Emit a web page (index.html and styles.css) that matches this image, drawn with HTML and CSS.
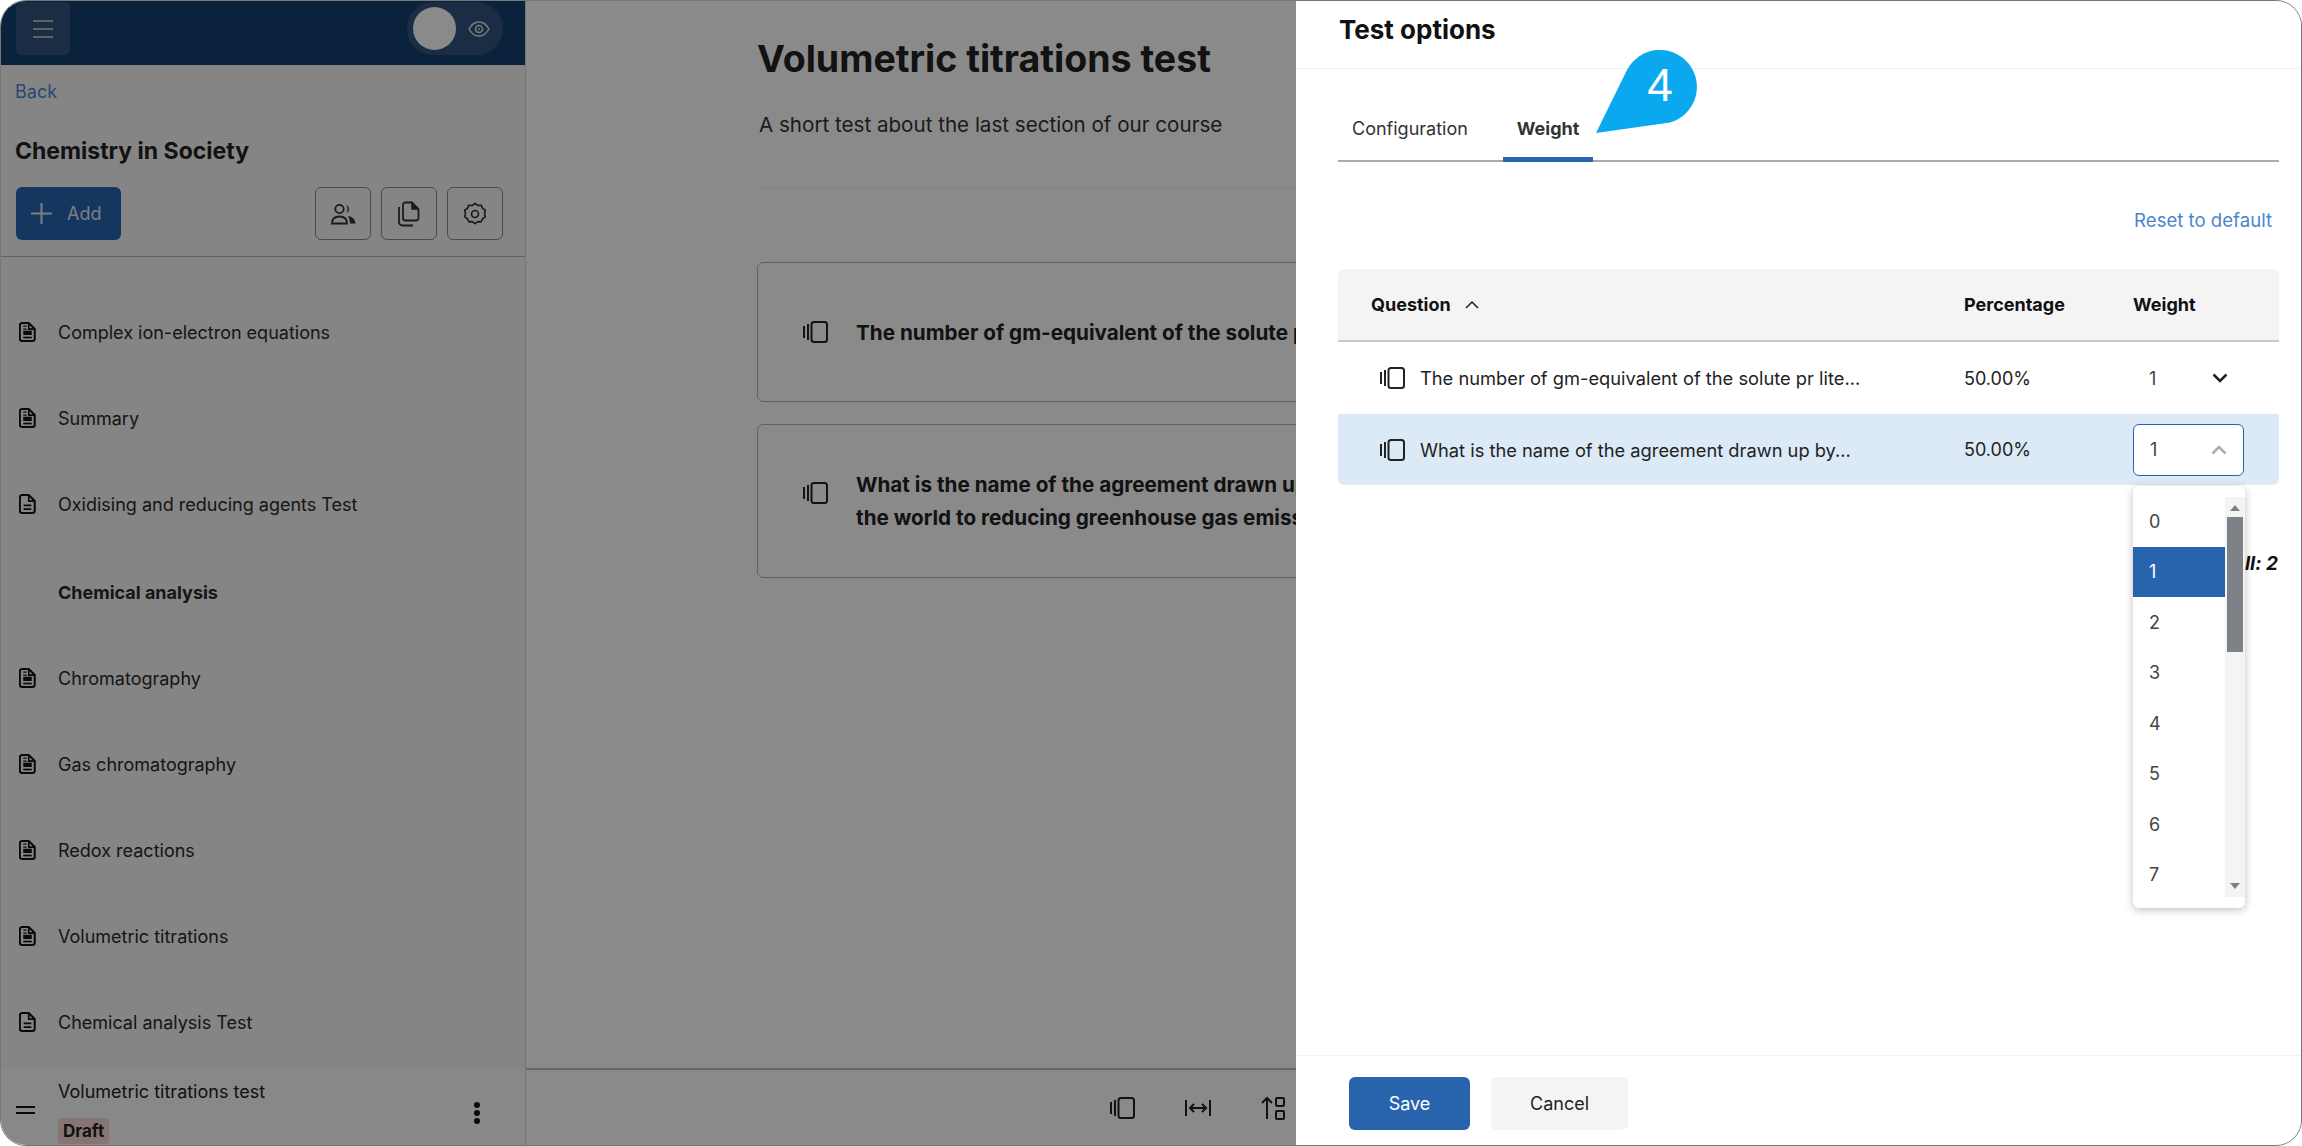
FILE: index.html
```html
<!DOCTYPE html>
<html lang="en">
<head>
<meta charset="utf-8">
<title>Test options</title>
<link rel="stylesheet" href="styles.css">
</head>
<body>
<svg class="defs" width="0" height="0" aria-hidden="true">
  <symbol id="doc" viewBox="0 0 20 24"><path d="M3.500 1.500h8l7 7v11.500a2.500 2.500 0 0 1-2.500 2.500H3.500A2.500 2.500 0 0 1 1 20V4a2.500 2.500 0 0 1 2.500-2.500z" fill="none" stroke="currentColor" stroke-width="2.400"/><path d="M11.500 1.500v7h7" fill="none" stroke="currentColor" stroke-width="2"/><path d="M5 5h4M5 8.500h4" stroke="currentColor" stroke-width="1.500"/><rect x="5" y="10.500" width="10" height="5" fill="currentColor"/><path d="M5 18.500h10" stroke="currentColor" stroke-width="2"/></symbol>
  <symbol id="test" viewBox="0 0 20 24"><path d="M3.500 1.500h8l7 7v11.500a2.500 2.500 0 0 1-2.500 2.500H3.500A2.500 2.500 0 0 1 1 20V4a2.500 2.500 0 0 1 2.500-2.500z" fill="none" stroke="currentColor" stroke-width="2.400"/><path d="M11.500 1.500v7h7" fill="none" stroke="currentColor" stroke-width="2"/><path d="M5.500 13.500h9M5.500 18h9" stroke="currentColor" stroke-width="2"/></symbol>
  <symbol id="cards" viewBox="0 0 25 22"><rect x="8.500" y="1" width="15.500" height="20" rx="2.500" fill="none" stroke="currentColor" stroke-width="2"/><path d="M1 5v12M5 3v16" fill="none" stroke="currentColor" stroke-width="2"/></symbol>
</svg>

<div class="frame">
  <aside class="sidebar">
    <header class="topbar">
      <button class="menu-btn" aria-label="Menu">
        <svg width="22" height="20" viewBox="0 0 22 20"><path d="M1 2h20M1 10h20M1 18h20" stroke="#b4b4b4" stroke-width="2"/></svg>
      </button>
      <div class="view-toggle">
        <span class="avatar"></span>
        <svg width="22" height="16" viewBox="0 0 22 16"><path d="M1 8c2.500-4.500 6-7 10-7s7.500 2.500 10 7c-2.500 4.500-6 7-10 7S3.500 12.500 1 8z" fill="none" stroke="#e6e6e6" stroke-width="1.500"/><circle cx="11" cy="8" r="3.500" fill="none" stroke="#e6e6e6" stroke-width="1.500"/><circle cx="11" cy="8" r="1" fill="#e6e6e6"/></svg>
      </div>
    </header>
    <a class="back">Back</a>
    <h2 class="course">Chemistry in Society</h2>
    <div class="actions">
      <button class="add-btn">
        <svg width="21" height="21" viewBox="0 0 20 20"><path d="M10 0v20M0 10h20" stroke="#e0e8f4" stroke-width="2"/></svg>
        <span>Add</span>
      </button>
      <div class="icon-btns">
        <button class="icon-btn" aria-label="Users"><svg width="25" height="22" viewBox="0 0 25 22"><circle cx="8.500" cy="6" r="4.200" fill="none" stroke="#333" stroke-width="1.800"/><path d="M1 20.500c0-4.500 3-7 7.500-7s7.500 2.500 7.500 7z" fill="none" stroke="#333" stroke-width="1.800"/><path d="M15 2a4.300 4.300 0 0 1 0 8.200c2-1 2-7 0-8.200zM17 13c4 .5 7 3 7.500 7.500H19c0-3-.8-5.500-2-7.500z" fill="#333"/></svg></button>
        <button class="icon-btn" aria-label="Copy"><svg width="22" height="26" viewBox="0 0 22 26"><path d="M7.500 1.500h6.500l6.500 6.500v9a2.500 2.500 0 0 1-2.500 2.500H7.500A2.500 2.500 0 0 1 5 17V4a2.500 2.500 0 0 1 2.500-2.500z" fill="none" stroke="#333" stroke-width="1.800"/><path d="M14 1.500v6.500h6.500" fill="#333" stroke="#333" stroke-width="1.500"/><path d="M1 6v15a3.500 3.500 0 0 0 3.500 3.500H15" fill="none" stroke="#333" stroke-width="1.800"/></svg></button>
        <button class="icon-btn" aria-label="Settings"><svg width="22" height="24" viewBox="0 0 24 26"><path d="M12 1.500l3 2.200 3.700-.3 1.600 3.400 3 2.100-1 3.600 1 3.600-3 2.100-1.600 3.400-3.700-.3-3 2.200-3-2.200-3.700.3-1.600-3.400-3-2.100 1-3.600-1-3.600 3-2.100 1.600-3.400 3.700.3z" fill="none" stroke="#333" stroke-width="1.800" stroke-linejoin="round"/><circle cx="12" cy="13" r="3.800" fill="none" stroke="#333" stroke-width="1.800"/></svg></button>
      </div>
    </div>
    <ul class="outline">
      <li class="item"><svg class="item-icon"><use href="#doc"/></svg><span>Complex ion-electron equations</span></li>
      <li class="item"><svg class="item-icon"><use href="#doc"/></svg><span>Summary</span></li>
      <li class="item"><svg class="item-icon"><use href="#test"/></svg><span>Oxidising and reducing agents Test</span></li>
      <li class="item section"><span>Chemical analysis</span></li>
      <li class="item"><svg class="item-icon"><use href="#doc"/></svg><span>Chromatography</span></li>
      <li class="item"><svg class="item-icon"><use href="#doc"/></svg><span>Gas chromatography</span></li>
      <li class="item"><svg class="item-icon"><use href="#doc"/></svg><span>Redox reactions</span></li>
      <li class="item"><svg class="item-icon"><use href="#doc"/></svg><span>Volumetric titrations</span></li>
      <li class="item"><svg class="item-icon"><use href="#test"/></svg><span>Chemical analysis Test</span></li>
    </ul>
    <div class="current">
      <svg class="handle" width="19" height="8" viewBox="0 0 19 8"><path d="M0 1h19M0 7h19" stroke="#111" stroke-width="2"/></svg>
      <div class="current-text">
        <div>Volumetric titrations test</div>
        <span class="badge">Draft</span>
      </div>
      <svg class="kebab" width="8" height="22" viewBox="0 0 8 22"><circle cx="4" cy="3" r="3" fill="#111"/><circle cx="4" cy="11" r="3" fill="#111"/><circle cx="4" cy="19" r="3" fill="#111"/></svg>
    </div>
  </aside>

  <main class="main">
    <div class="content">
      <h1 class="test-title">Volumetric titrations test</h1>
      <p class="test-desc">A short test about the last section of our course</p>
      <div class="rule"></div>
      <article class="q-card">
        <svg class="q-icon"><use href="#cards"/></svg>
        <p>The number of gm-equivalent of the solute per litre of solution</p>
      </article>
      <article class="q-card">
        <svg class="q-icon top"><use href="#cards"/></svg>
        <p>What is the name of the agreement drawn up by countries around<br>the world to reducing greenhouse gas emissions?</p>
      </article>
    </div>
    <footer class="toolbar">
      <svg class="tool" width="25" height="22"><use href="#cards"/></svg>
      <svg class="tool" width="26" height="18" viewBox="0 0 26 18"><path d="M1 1v16M25 1v16M5 9h16M9 5L5 9l4 4M17 5l4 4-4 4" fill="none" stroke="#222" stroke-width="2"/></svg>
      <svg class="tool" width="24" height="24" viewBox="0 0 24 24"><path d="M6 23V2M1 7l5-5 5 5" fill="none" stroke="#222" stroke-width="2"/><rect x="15" y="2" width="8" height="8" rx="1" fill="none" stroke="#222" stroke-width="2"/><rect x="15" y="15" width="8" height="8" rx="1" fill="none" stroke="#222" stroke-width="2"/></svg>
    </footer>
  </main>

  <div class="scrim"></div>

  <section class="drawer">
    <header class="drawer-head"><h2>Test options</h2></header>
    <nav class="tabs">
      <a class="tab">Configuration</a>
      <a class="tab active">Weight</a>
    </nav>
    <div class="reset"><a>Reset to default</a></div>
    <div class="table">
      <div class="tr th">
        <div class="c-q head-q">Question
          <svg width="14" height="8" viewBox="0 0 14 8"><path d="M1 7l6-6 6 6" fill="none" stroke="#222" stroke-width="1.500"/></svg>
        </div>
        <div class="c-p">Percentage</div>
        <div class="c-w">Weight</div>
      </div>
      <div class="tr">
        <div class="c-q cell-q"><svg class="row-icon"><use href="#cards"/></svg><span>The number of gm-equivalent of the solute pr lite...</span></div>
        <div class="c-p">50.00%</div>
        <div class="c-w"><div class="weight">1
          <svg width="16" height="10" viewBox="0 0 16 10"><path d="M1.500 1.500L8 8l6.500-6.500" fill="none" stroke="#222" stroke-width="2.500"/></svg>
        </div></div>
      </div>
      <div class="tr selected">
        <div class="c-q cell-q"><svg class="row-icon"><use href="#cards"/></svg><span>What is the name of the agreement drawn up by...</span></div>
        <div class="c-p">50.00%</div>
        <div class="c-w"><div class="weight open">1
          <svg width="16" height="10" viewBox="0 0 16 10"><path d="M1.500 8.500L8 2l6.500 6.500" fill="none" stroke="#a9adb0" stroke-width="2.500"/></svg>
        </div></div>
      </div>
    </div>
    <div class="total">Overall: 2</div>
    <div class="drawer-foot">
      <button class="btn primary">Save</button>
      <button class="btn ghost">Cancel</button>
    </div>

    <div class="dropdown">
      <ul class="options">
        <li>0</li><li class="on">1</li><li>2</li><li>3</li><li>4</li><li>5</li><li>6</li><li>7</li>
      </ul>
      <div class="scrollbar">
        <svg width="12" height="7" viewBox="0 0 12 7"><path d="M6 0l5 6H1z" fill="#7c8287"/></svg>
        <div class="thumb"></div>
        <svg class="down" width="12" height="7" viewBox="0 0 12 7"><path d="M6 7L1 1h10z" fill="#7c8287"/></svg>
      </div>
    </div>

    <div class="callout">
      <svg width="115" height="100" viewBox="0 0 115 100"><path d="M4 92L35 29A37 37 0 1 1 78 81.500Z" fill="#0aa8ee"/></svg>
      <span>4</span>
    </div>
  </section>
</div>
</body>
</html>
```

FILE: styles.css
```css
* { box-sizing: border-box; }
html, body { margin: 0; padding: 0; background: #fff; }
body { font-family: Inter, "Noto Sans", sans-serif; color: #222; font-size: 18px; width: 2302px; height: 1146px; overflow: hidden; }
button { font: inherit; cursor: pointer; }
ul { list-style: none; margin: 0; padding: 0; }
h1, h2, p { margin: 0; }
.defs { position: absolute; }

.frame { position: relative; display: flex; width: 2302px; height: 1146px; border: 1.5px solid #777; border-radius: 26px; overflow: hidden; background: #fff; }

.sidebar { width: 525px; flex: none; display: flex; flex-direction: column; background: #f5f5f5; border-right: 1px solid #d8d8d8; }
.topbar { height: 64px; flex: none; display: flex; justify-content: space-between; padding: 1px 22px 0 15px; background: #16406f; }
.menu-btn { width: 54px; height: 53px; display: flex; align-items: center; justify-content: center; background: #31547f; border: 0; border-radius: 6px; }
.view-toggle { width: 96px; height: 53px; display: flex; align-items: center; gap: 12px; padding-left: 6px; background: #31547f; border-radius: 27px; }
.avatar { width: 43px; height: 43px; border-radius: 50%; background: #fff; }
.back { margin: 16px 0 0 14px; color: #4a86cf; font-size: 18px; line-height: 22px; }
.course { margin: 34px 0 0 14px; font-size: 23px; line-height: 28px; font-weight: 700; color: #222; }
.actions { display: flex; justify-content: space-between; padding: 22px 22px 16px 15px; border-bottom: 1.5px solid #b5b5b5; }
.add-btn { width: 105px; height: 53px; display: flex; align-items: center; gap: 15px; padding-left: 15px; background: #2864ae; color: #e0e8f4; border: 0; border-radius: 6px; font-size: 18px; }
.icon-btns { display: flex; gap: 10px; }
.icon-btn { width: 56px; height: 53px; display: flex; align-items: center; justify-content: center; background: transparent; border: 1.5px solid #8b8b8b; border-radius: 6px; }

.outline { flex: 1; padding-top: 32px; overflow: hidden; }
.item { height: 86px; display: flex; align-items: center; padding-left: 18px; font-size: 18px; color: #2a2a2a; }
.item-icon { width: 17px; height: 22px; flex: none; margin-right: 22px; color: #111; }
.section { margin-top: 2px; padding-left: 57px; font-weight: 700; }
.current { height: 77px; flex: none; display: flex; align-items: center; padding: 0 0 0 15px; background: #fbfbfb; }
.handle { flex: none; margin-top: 6px; }
.current-text { flex: 1; align-self: flex-start; margin-left: 23px; padding-top: 11px; line-height: 26px; font-size: 18px; }
.badge { display: block; width: fit-content; margin-top: 13px; padding: 0 5px; font-size: 17px; line-height: 26px; font-weight: 700; background: #f6d9d5; border-radius: 4px; }
.kebab { flex: none; margin: 12px 44px 0 0; }

.main { flex: 1; display: flex; flex-direction: column; min-width: 0; background: #fff; }
.content { flex: 1; padding: 36px 0 0 231px; overflow: hidden; }
.test-title { font-size: 37.500px; line-height: 44px; font-weight: 700; color: #222; white-space: nowrap; }
.test-desc { margin: 31px 0 0 2px; font-size: 20.600px; line-height: 26px; color: #333; white-space: nowrap; }
.rule { width: 800px; margin-top: 50px; border-top: 1px solid #eee; }
.q-card { width: 800px; display: flex; align-items: center; margin-top: 73px; padding: 0 40px 0 45px; height: 140px; border: 1.5px solid #b4b4b4; border-radius: 6px; }
.q-card + .q-card { margin-top: 22px; height: 154px; }
.q-card p { font-size: 20.700px; line-height: 33px; font-weight: 700; white-space: nowrap; }
.q-icon { width: 25px; height: 22px; margin-right: 28px; flex: none; color: #222; }
.q-icon.top { margin-bottom: 16px; }
.toolbar { height: 77px; flex: none; display: flex; align-items: center; gap: 50px; padding-left: 584px; border-top: 2px solid #bdbdbd; color: #222; }
.tool { flex: none; }

.scrim { position: absolute; inset: 0; background: rgba(0, 0, 0, .46); }

.drawer { position: absolute; top: 0; right: 0; bottom: 0; width: 1005px; display: flex; flex-direction: column; background: #fff; color: #222; }
.drawer-head { height: 68px; flex: none; padding: 12px 0 0 43px; border-bottom: 1px solid #f0f0f0; }
.drawer-head h2 { font-size: 26px; line-height: 34px; font-weight: 700; color: #111; }
.tabs { height: 93px; flex: none; display: flex; align-items: flex-end; margin: 0 22px 0 42px; border-bottom: 2px solid #a9abad; gap: 21px; }
.tab { height: 62px; padding: 0 14px; margin-bottom: -2px; display: flex; align-items: center; font-size: 18px; color: #333; border-bottom: 5px solid transparent; }
.tab.active { font-weight: 700; border-bottom-color: #2864ae; }
.reset { flex: none; margin: 44px 29px 0 0; text-align: right; font-size: 18.600px; line-height: 28px; color: #4a86cf; }
.table { flex: none; margin: 35px 22px 0 42px; }
.tr { height: 72px; display: flex; align-items: center; font-size: 18px; }
.th { height: 73px; font-weight: 700; background: #f4f4f4; border-bottom: 2px solid #c8cacc; border-radius: 6px 6px 0 0; color: #111; }
.selected { height: 71px; background: #dce9f7; border-radius: 0 0 6px 6px; }
.c-q { width: 626px; flex: none; }
.c-p { width: 169px; flex: none; }
.c-w { flex: 1; }
.head-q { display: flex; align-items: center; gap: 14px; padding-left: 33px; }
.cell-q { display: flex; align-items: center; gap: 15px; padding-left: 42px; font-size: 18.300px; }
.row-icon { width: 25px; height: 22px; flex: none; color: #222; }
.weight { width: 111px; height: 52px; display: flex; align-items: center; justify-content: space-between; padding: 0 16px; color: #444; }
.weight.open { background: #fff; border: 1.5px solid #2864ae; border-radius: 6px; }
.total { flex: none; margin: 67px 23px 0 0; text-align: right; font-weight: 700; font-style: italic; font-size: 19px; line-height: 24px; color: #111; }
.drawer-foot { margin-top: auto; height: 90px; flex: none; display: flex; gap: 21px; padding: 21px 0 0 53px; border-top: 1px solid #f2f2f2; }
.btn { height: 53px; border: 0; border-radius: 6px; font-size: 18px; }
.primary { width: 121px; background: #2864ae; color: #fff; }
.ghost { width: 137px; background: #f4f4f4; color: #222; }

.dropdown { position: absolute; left: 837px; top: 485px; width: 112px; height: 422px; display: flex; background: #fff; border-radius: 6px; box-shadow: 0 2px 8px rgba(0, 0, 0, .25); }
.options { flex: 1; padding-top: 10px; }
.options li { height: 50.500px; display: flex; align-items: center; padding-left: 16px; font-size: 18px; color: #444; }
.options li.on { background: #2864ae; color: #fff; }
.scrollbar { position: relative; width: 20px; flex: none; margin: 11px 0; display: flex; flex-direction: column; align-items: center; padding-top: 8px; background: #f4f4f4; }
.thumb { width: 16px; height: 135px; margin-top: 5px; background: #7c8287; }
.down { margin-top: auto; margin-bottom: 8px; }

.callout { position: absolute; left: 296px; top: 40px; width: 115px; height: 100px; }
.callout svg { display: block; }
.callout span { position: absolute; left: 49px; top: 19px; width: 38px; text-align: center; font-family: "Liberation Sans", Arial, sans-serif; font-size: 46px; line-height: 50px; color: #fff; }
```
